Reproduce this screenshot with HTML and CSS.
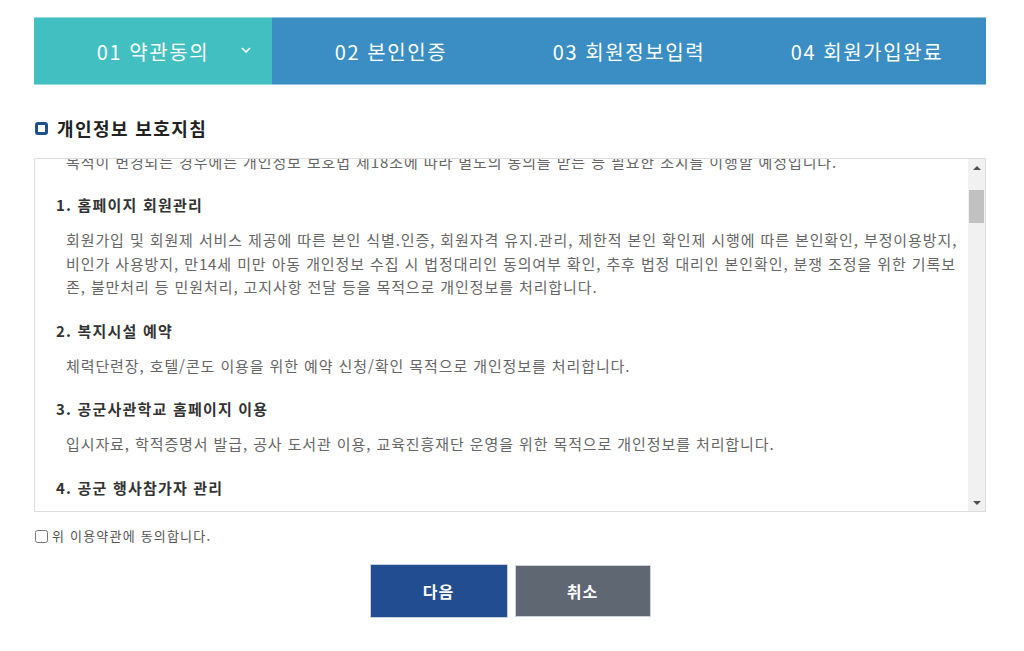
FILE: index.html
```html
<!DOCTYPE html>
<html lang="ko">
<head>
  <meta charset="UTF-8">
  <meta name="viewport" content="width=device-width, initial-scale=1.0" />
  <title>회원가입 - 약관동의</title>
  <link rel="stylesheet" href="styles.css">
</head>
<body>

  <div class="wrap">
    <ol class="steps">
      <li class="step on">
        01 약관동의
        <svg class="step-arrow" viewBox="0 0 10 6"><polyline points="1,1 5,5 9,1" /></svg>
      </li>
      <li class="step">02 본인인증</li>
      <li class="step">03 회원정보입력</li>
      <li class="step">04 회원가입완료</li>
    </ol>

    <h2 class="tit"><span class="tit-ico"></span>개인정보 보호지침</h2>

    <div class="terms-box">
      <div class="terms" id="terms">
        <p class="terms-lead">공군사관학교(이하 '공사')는 「개인정보 보호법」 제30조에 따라 정보주체의 개인정보를 보호하고 이와 관련한 고충을 신속하고 원활하게 처리할 수 있도록 하기 위하여 다음과 같이 개인정보 처리방침을 수립·공개합니다.</p>

        <h3 class="terms-tit">제1조 (개인정보의 처리 목적)</h3>
        <p class="terms-txt">공사는 다음의 목적을 위하여 개인정보를 처리합니다. 처리하고 있는 개인정보는 다음의 목적 이외의 용도로는 이용되지 않으며, 이용<br>목적이 변경되는 경우에는 개인정보 보호법 제18조에 따라 별도의 동의를 받는 등 필요한 조치를 이행할 예정입니다.</p>

        <h4 class="terms-tit" id="purpose-1">1. 홈페이지 회원관리</h4>
        <p class="terms-txt">회원가입 및 회원제 서비스 제공에 따른 본인 식별.인증, 회원자격 유지.관리, 제한적 본인 확인제 시행에 따른 본인확인, 부정이용방지, 비인가 사용방지, 만14세 미만 아동 개인정보 수집 시 법정대리인 동의여부 확인, 추후 법정 대리인 본인확인, 분쟁 조정을 위한 기록보존, 불만처리 등 민원처리, 고지사항 전달 등을 목적으로 개인정보를 처리합니다.</p>

        <h4 class="terms-tit">2. 복지시설 예약</h4>
        <p class="terms-txt">체력단련장, 호텔/콘도 이용을 위한 예약 신청/확인 목적으로 개인정보를 처리합니다.</p>

        <h4 class="terms-tit">3. 공군사관학교 홈페이지 이용</h4>
        <p class="terms-txt">입시자료, 학적증명서 발급, 공사 도서관 이용, 교육진흥재단 운영을 위한 목적으로 개인정보를 처리합니다.</p>

        <h4 class="terms-tit">4. 공군 행사참가자 관리</h4>
        <p class="terms-txt">공군 행사 참가자 신원 확인, 행사 안내 및 출입 관리, 기념품 발송 등을 목적으로 개인정보를 처리합니다.</p>

        <h4 class="terms-tit">5. 민원사무 처리</h4>
        <p class="terms-txt">민원인의 신원 확인, 민원사항 확인, 사실조사를 위한 연락.통지, 처리결과 통보 등을 목적으로 개인정보를 처리합니다.</p>

        <h3 class="terms-tit">제2조 (개인정보의 처리 및 보유 기간)</h3>
        <p class="terms-txt">① 공사는 법령에 따른 개인정보 보유.이용기간 또는 정보주체로부터 개인정보를 수집 시에 동의받은 개인정보 보유.이용기간 내에서 개인정보를 처리.보유합니다.<br>② 각각의 개인정보 처리 및 보유 기간은 다음과 같습니다.<br>- 홈페이지 회원가입 및 관리 : 회원 탈퇴 시까지<br>- 복지시설 예약 : 이용 완료 후 1년<br>- 공군사관학교 홈페이지 이용 : 회원 탈퇴 시까지<br>- 행사참가자 관리 : 행사 종료 후 1년<br>- 민원사무 처리 : 민원처리 종료 후 3년<br>③ 다만, 다음의 사유에 해당하는 경우에는 해당 사유 종료 시까지 보유합니다.<br>- 관계 법령 위반에 따른 수사.조사 등이 진행 중인 경우에는 해당 수사.조사 종료 시까지<br>- 홈페이지 이용에 따른 채권.채무관계 잔존 시에는 해당 채권.채무관계 정산 시까지</p>

        <h3 class="terms-tit">제3조 (개인정보의 제3자 제공)</h3>
        <p class="terms-txt">① 공사는 정보주체의 개인정보를 제1조(개인정보의 처리 목적)에서 명시한 범위 내에서만 처리하며, 정보주체의 동의, 법률의 특별한 규정 등 개인정보 보호법 제17조 및 제18조에 해당하는 경우에만 개인정보를 제3자에게 제공합니다.<br>② 공사는 다음과 같이 개인정보를 제3자에게 제공하고 있습니다.<br>- 개인정보를 제공받는 자 : 공군사관학교 교육진흥재단<br>- 제공받는 자의 개인정보 이용목적 : 장학사업 및 후원회원 관리<br>- 제공하는 개인정보 항목 : 성명, 연락처, 주소<br>- 제공받는 자의 보유.이용기간 : 후원 종료 후 1년</p>

        <h3 class="terms-tit">제4조 (개인정보처리의 위탁)</h3>
        <p class="terms-txt">① 공사는 원활한 개인정보 업무처리를 위하여 다음과 같이 개인정보 처리업무를 위탁하고 있습니다.<br>- 위탁받는 자(수탁자) : 홈페이지 유지보수 업체<br>- 위탁하는 업무의 내용 : 홈페이지 및 회원관리 시스템 운영.유지보수<br>② 공사는 위탁계약 체결 시 개인정보 보호법 제26조에 따라 위탁업무 수행목적 외 개인정보 처리금지, 기술적.관리적 보호조치, 재위탁 제한, 수탁자에 대한 관리.감독, 손해배상 등 책임에 관한 사항을 계약서 등 문서에 명시하고, 수탁자가 개인정보를 안전하게 처리하는지를 감독하고 있습니다.<br>③ 위탁업무의 내용이나 수탁자가 변경될 경우에는 지체없이 본 개인정보 처리방침을 통하여 공개하도록 하겠습니다.</p>

        <h3 class="terms-tit">제5조 (정보주체와 법정대리인의 권리.의무 및 행사방법)</h3>
        <p class="terms-txt">① 정보주체는 공사에 대해 언제든지 개인정보 열람, 정정, 삭제, 처리정지 요구 등의 권리를 행사할 수 있습니다.<br>② 제1항에 따른 권리 행사는 공사에 대해 개인정보 보호법 시행령 제41조제1항에 따라 서면, 전자우편, 모사전송(FAX) 등을 통하여 하실 수 있으며 공사는 이에 대해 지체 없이 조치하겠습니다.<br>③ 제1항에 따른 권리 행사는 정보주체의 법정대리인이나 위임을 받은 자 등 대리인을 통하여 하실 수 있습니다. 이 경우 개인정보 보호법 시행규칙 별지 제11호 서식에 따른 위임장을 제출하셔야 합니다.<br>④ 개인정보 열람 및 처리정지 요구는 개인정보 보호법 제35조 제4항, 제37조 제2항에 의하여 정보주체의 권리가 제한 될 수 있습니다.<br>⑤ 개인정보의 정정 및 삭제 요구는 다른 법령에서 그 개인정보가 수집 대상으로 명시되어 있는 경우에는 그 삭제를 요구할 수 없습니다.<br>⑥ 공사는 정보주체 권리에 따른 열람의 요구, 정정.삭제의 요구, 처리정지의 요구 시 열람 등 요구를 한 자가 본인이거나 정당한 대리인인지를 확인합니다.</p>

        <h3 class="terms-tit">제6조 (처리하는 개인정보 항목)</h3>
        <p class="terms-txt">공사는 다음의 개인정보 항목을 처리하고 있습니다.<br>① 홈페이지 회원가입 및 관리<br>- 필수항목 : 성명, 생년월일, 아이디, 비밀번호, 휴대전화번호, 이메일<br>- 선택항목 : 자택주소, 자택전화번호, 소속<br>② 복지시설 예약<br>- 필수항목 : 성명, 군번, 소속, 휴대전화번호, 이용일자<br>③ 행사참가자 관리<br>- 필수항목 : 성명, 생년월일, 휴대전화번호, 차량번호<br>④ 인터넷 서비스 이용과정에서 아래 개인정보 항목이 자동으로 생성되어 수집될 수 있습니다.<br>- IP주소, 쿠키, MAC주소, 서비스 이용기록, 방문기록, 불량 이용기록 등</p>

        <h3 class="terms-tit">제7조 (개인정보의 파기)</h3>
        <p class="terms-txt">① 공사는 개인정보 보유기간의 경과, 처리목적 달성 등 개인정보가 불필요하게 되었을 때에는 지체없이 해당 개인정보를 파기합니다.<br>② 정보주체로부터 동의받은 개인정보 보유기간이 경과하거나 처리목적이 달성되었음에도 불구하고 다른 법령에 따라 개인정보를 계속 보존하여야 하는 경우에는, 해당 개인정보를 별도의 데이터베이스(DB)로 옮기거나 보관장소를 달리하여 보존합니다.<br>③ 개인정보 파기의 절차 및 방법은 다음과 같습니다.<br>- 파기절차 : 공사는 파기 사유가 발생한 개인정보를 선정하고, 개인정보 보호책임자의 승인을 받아 개인정보를 파기합니다.<br>- 파기방법 : 전자적 파일 형태의 정보는 기록을 재생할 수 없는 기술적 방법을 사용하며, 종이에 출력된 개인정보는 분쇄기로 분쇄하거나 소각을 통하여 파기합니다.</p>

        <h3 class="terms-tit">제8조 (개인정보의 안전성 확보조치)</h3>
        <p class="terms-txt">공사는 개인정보의 안전성 확보를 위해 다음과 같은 조치를 취하고 있습니다.<br>- 관리적 조치 : 내부관리계획 수립.시행, 정기적 직원 교육 등<br>- 기술적 조치 : 개인정보처리시스템 등의 접근권한 관리, 접근통제시스템 설치, 고유식별정보 등의 암호화, 보안프로그램 설치<br>- 물리적 조치 : 전산실, 자료보관실 등의 접근통제</p>

        <h3 class="terms-tit">제9조 (개인정보 자동 수집 장치의 설치.운영 및 거부에 관한 사항)</h3>
        <p class="terms-txt">① 공사는 이용자에게 개별적인 맞춤서비스를 제공하기 위해 이용정보를 저장하고 수시로 불러오는 '쿠키(cookie)'를 사용합니다.<br>② 쿠키는 웹사이트를 운영하는데 이용되는 서버가 이용자의 컴퓨터 브라우저에게 보내는 소량의 정보이며 이용자의 PC 컴퓨터내의 하드디스크에 저장되기도 합니다.<br>③ 이용자는 웹브라우저 상단의 도구 &gt; 인터넷 옵션 &gt; 개인정보 메뉴의 옵션 설정을 통해 쿠키 저장을 거부 할 수 있습니다. 쿠키 저장을 거부할 경우 맞춤형 서비스 이용에 어려움이 발생할 수 있습니다.</p>

        <h3 class="terms-tit">제10조 (개인정보 보호책임자)</h3>
        <p class="terms-txt">① 공사는 개인정보 처리에 관한 업무를 총괄해서 책임지고, 개인정보 처리와 관련한 정보주체의 불만처리 및 피해구제 등을 위하여 아래와 같이 개인정보 보호책임자를 지정하고 있습니다.<br>- 개인정보 보호책임자 : 정보통신대대장<br>- 개인정보 보호담당자 : 정보체계관리담당<br>② 정보주체께서는 공사의 서비스를 이용하시면서 발생한 모든 개인정보 보호 관련 문의, 불만처리, 피해구제 등에 관한 사항을 개인정보 보호책임자 및 담당부서로 문의하실 수 있습니다. 공사는 정보주체의 문의에 대해 지체 없이 답변 및 처리해드릴 것입니다.</p>

        <h3 class="terms-tit">제11조 (개인정보 열람청구)</h3>
        <p class="terms-txt">정보주체는 개인정보 보호법 제35조에 따른 개인정보의 열람 청구를 공사 개인정보 보호담당 부서에 할 수 있습니다. 공사는 정보주체의 개인정보 열람청구가 신속하게 처리되도록 노력하겠습니다. 정보주체는 위의 열람청구 접수.처리부서 이외에, 개인정보보호위원회의 '개인정보보호 종합지원 포털' 웹사이트를 통하여서도 개인정보 열람청구를 하실 수 있습니다.</p>

        <h3 class="terms-tit">제12조 (권익침해 구제방법)</h3>
        <p class="terms-txt">정보주체는 개인정보침해로 인한 구제를 받기 위하여 개인정보분쟁조정위원회, 한국인터넷진흥원 개인정보침해신고센터 등에 분쟁해결이나 상담 등을 신청할 수 있습니다. 이 밖에 기타 개인정보침해의 신고, 상담에 대하여는 아래의 기관에 문의하시기 바랍니다.<br>- 개인정보분쟁조정위원회 : (국번없이) 1833-6972<br>- 개인정보침해신고센터 : (국번없이) 118<br>- 대검찰청 사이버수사과 : (국번없이) 1301<br>- 경찰청 사이버안전국 : (국번없이) 182<br>「개인정보보호법」 제35조, 제36조, 제37조의 규정에 의한 요구에 대하여 공공기관의 장이 행한 처분 또는 부작위로 인하여 권리 또는 이익의 침해를 받은 자는 행정심판법이 정하는 바에 따라 행정심판을 청구할 수 있습니다.</p>

        <h3 class="terms-tit">제13조 (영상정보처리기기 설치.운영)</h3>
        <p class="terms-txt">① 공사는 시설안전 및 화재예방, 범죄예방을 목적으로 영상정보처리기기를 설치.운영하고 있습니다.<br>② 설치 대수, 설치 위치 및 촬영 범위 : 정문, 주요 건물 출입구, 주차장 등<br>③ 관리책임자 및 접근권한자 : 기지방호담당<br>④ 영상정보 촬영시간, 보관기간, 보관장소 및 처리방법 : 24시간 촬영, 촬영일로부터 30일 보관 후 자동 삭제<br>⑤ 영상정보 확인 방법 및 장소에 관한 사항 : 관리책임자에게 미리 연락하고 공사를 방문하시면 확인 가능합니다.<br>⑥ 정보주체의 영상정보 열람 등 요구에 대한 조치 : 개인영상정보 열람.존재확인 청구서로 신청하여야 하며, 정보주체 자신이 촬영된 경우 또는 명백히 정보주체의 생명.신체.재산 이익을 위해 필요한 경우에 한해 열람을 허용합니다.</p>

        <h3 class="terms-tit">제14조 (개인정보 처리방침 변경)</h3>
        <p class="terms-txt">① 이 개인정보 처리방침은 시행일로부터 적용되며, 법령 및 방침에 따른 변경내용의 추가, 삭제 및 정정이 있는 경우에는 변경사항의 시행 7일 전부터 공지사항을 통하여 고지할 것입니다.<br>② 이전의 개인정보 처리방침은 홈페이지 하단의 개인정보처리방침 메뉴에서 확인하실 수 있습니다.</p>
      </div>

      <div class="scrollbar">
        <span class="sb-btn sb-up"></span>
        <span class="sb-track" id="sbTrack"><span class="sb-thumb" id="sbThumb"></span></span>
        <span class="sb-btn sb-down"></span>
      </div>
    </div>

    <label class="agree"><input type="checkbox" id="agree"> 위 이용약관에 동의합니다.</label>

    <div class="btns">
      <button class="btn btn-next">다음</button>
      <button class="btn btn-cancel">취소</button>
    </div>
  </div>

  <script>
    const terms = document.getElementById("terms");
    const purpose = document.getElementById("purpose-1");
    const sbTrack = document.getElementById("sbTrack");
    const sbThumb = document.getElementById("sbThumb");

    function syncScrollbar() {
      const trackH = sbTrack.clientHeight;
      const thumbH = Math.max(20, trackH * terms.clientHeight / terms.scrollHeight);
      const maxScroll = terms.scrollHeight - terms.clientHeight;
      const top = maxScroll > 0 ? (trackH - thumbH) * terms.scrollTop / maxScroll : 0;
      sbThumb.style.height = thumbH + "px";
      sbThumb.style.top = top + "px";
    }

    terms.addEventListener("scroll", syncScrollbar);
    terms.scrollTop = purpose.offsetTop - 35;
    syncScrollbar();
  </script>
</body>
</html>
```

FILE: styles.css
```css
* {
  margin: 0;
  padding: 0;
  box-sizing: border-box;
}

body {
  font-family: "Noto Sans CJK KR", "Noto Sans", sans-serif;
  color: #333;
  background-color: #fff;
}

.wrap {
  width: 952px;
  margin: 17px 0 0 34px;
}

/* 단계 표시 */
.steps {
  display: flex;
  list-style: none;
}

.step {
  flex: 1;
  position: relative;
  height: 68px;
  display: flex;
  align-items: center;
  justify-content: center;
  font-size: 20px;
  letter-spacing: 1.6px;
  color: #fff;
  background-color: #3a8ec3;
  border-top: 1px solid rgba(255,255,255,0.45);
  border-bottom: 1px solid rgba(255,255,255,0.45);
}

.step.on {
  background-color: #42c0c1;
}

.step-arrow {
  position: absolute;
  right: 21px;
  top: 50%;
  width: 10px;
  height: 6px;
  margin-top: -4px;
  fill: none;
  stroke: #fff;
  stroke-width: 1.6;
}

/* 제목 */
.tit {
  display: flex;
  align-items: center;
  gap: 9px;
  margin-top: 30px;
  font-size: 18px;
  line-height: 26px;
  letter-spacing: 1.4px;
  font-weight: bold;
  color: #222;
}

.tit-ico {
  width: 13px;
  height: 13px;
  margin-left: 1px;
  border: 3px solid #1d4f91;
  border-radius: 3px;
}

/* 약관 박스 */
.terms-box {
  position: relative;
  height: 354px;
  margin-top: 17px;
  border: 1px solid #ddd;
}

.terms {
  height: 100%;
  padding: 12px 11px 30px 21px;
  overflow-y: scroll;
  scrollbar-width: none;
}

.scrollbar {
  position: absolute;
  top: 0;
  right: 0;
  bottom: 0;
  width: 17px;
  display: flex;
  flex-direction: column;
  background-color: #f1f1f1;
}

.sb-btn {
  height: 17px;
  display: flex;
  align-items: center;
  justify-content: center;
}

.sb-btn::before {
  content: "";
  border-left: 4px solid transparent;
  border-right: 4px solid transparent;
}

.sb-up::before {
  border-bottom: 4px solid #505050;
}

.sb-down::before {
  border-top: 4px solid #505050;
}

.sb-track {
  flex: 1;
  position: relative;
}

.sb-thumb {
  position: absolute;
  left: 1px;
  right: 1px;
  background-color: #c1c1c1;
}

.terms-lead,
.terms-txt {
  padding-left: 10px;
  font-size: 15px;
  line-height: 23.5px;
  letter-spacing: 0.9px;
  color: #666;
}

.terms-txt {
  margin-top: 12px;
}

.terms-tit {
  margin-top: 21px;
  font-size: 15px;
  line-height: 22px;
  letter-spacing: 1.2px;
  font-weight: bold;
  color: #333;
}

/* 동의 */
.agree {
  display: flex;
  align-items: center;
  gap: 4px;
  margin-top: 14px;
  font-size: 13px;
  line-height: 20px;
  letter-spacing: 1.2px;
  color: #555;
}

.agree input {
  width: 13px;
  height: 13px;
  margin-left: 1px;
}

/* 버튼 */
.btns {
  display: flex;
  justify-content: center;
  align-items: center;
  gap: 7px;
  margin-top: 18px;
}

.btn {
  width: 138px;
  height: 54px;
  border: 1px solid #c9d1de;
  font-family: inherit;
  font-size: 16px;
  letter-spacing: 1px;
  font-weight: bold;
  color: #fff;
  cursor: pointer;
}

.btn-next {
  background-color: #234d91;
}

.btn-cancel {
  width: 136px;
  height: 52px;
  background-color: #5f6772;
}
```
